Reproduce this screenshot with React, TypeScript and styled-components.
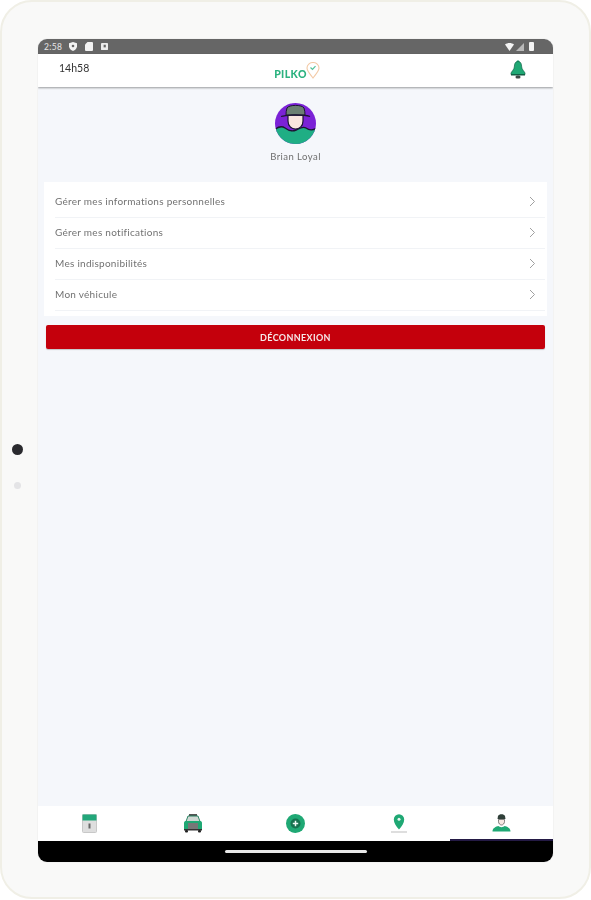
import React from "react";
import styled, { createGlobalStyle } from "styled-components";

const Global = createGlobalStyle`
  html, body { margin: 0; padding: 0; background: #ffffff; }
  body { font-family: "Lato", "Noto Sans", sans-serif; }
  * { box-sizing: border-box; }
`;

const Tablet = styled.div`
  position: relative;
  width: 591px;
  height: 899px;
  padding: 37px 36px;
  background: #f9f9f8;
  border: 2px solid #f0efe6;
  border-radius: 32px;
  display: flex;
  justify-content: center;
`;

const Sensor = styled.div<{ $top: number; $size: number; $color: string; $left: number }>`
  position: absolute;
  top: ${(p) => p.$top}px;
  left: ${(p) => p.$left}px;
  width: ${(p) => p.$size}px;
  height: ${(p) => p.$size}px;
  border-radius: 50%;
  background: ${(p) => p.$color};
`;

const Screen = styled.div`
  width: 515px;
  height: 823px;
  border-radius: 9px;
  overflow: hidden;
  display: flex;
  flex-direction: column;
  background: #f5f7fb;
  box-shadow: 0 0 1px rgba(0, 0, 0, 0.25);
  filter: blur(0.55px);
`;

const StatusBar = styled.div`
  height: 15px;
  flex: none;
  background: #666666;
  display: flex;
  align-items: center;
  justify-content: space-between;
  padding: 0 18px 0 6px;
`;

const StatusGroup = styled.div<{ $gap: number }>`
  display: flex;
  align-items: center;
  gap: ${(p) => p.$gap}px;
`;

const StatusTime = styled.span`
  font-size: 8.5px;
  color: #e6e6e6;
  letter-spacing: 0.3px;
  margin-right: 1px;
`;

const Header = styled.header`
  position: relative;
  height: 33px;
  flex: none;
  background: #ffffff;
  box-shadow: 0 1px 2px rgba(0, 0, 0, 0.38);
  display: grid;
  grid-template-columns: 1fr auto 1fr;
  padding: 0 27px 0 21px;
`;

const Clock = styled.span`
  font-size: 10.5px;
  color: #333333;
  margin-top: 8px;
`;

const Logo = styled.div`
  display: flex;
  align-items: flex-start;
  margin: 8px 0 0 9px;
`;

const LogoText = styled.span`
  font-size: 10.5px;
  font-weight: 900;
  color: #2bb27f;
  letter-spacing: 0.4px;
  line-height: 14px;
  margin-top: 5px;
`;

const BellSlot = styled.div`
  display: flex;
  justify-content: flex-end;
  align-items: flex-start;
  padding-top: 6px;
`;

const Content = styled.main`
  flex: 1;
  display: flex;
  flex-direction: column;
  align-items: center;
  padding-top: 16px;
`;

const Name = styled.div`
  font-size: 9.5px;
  color: #6e6e6e;
  letter-spacing: 0.45px;
  margin-top: 7px;
  line-height: 12px;
`;

const Menu = styled.ul`
  list-style: none;
  margin: 19px 0 0 6px;
  padding: 5px 2px 5px 11px;
  width: 503px;
  align-self: flex-start;
  background: #ffffff;
`;

const MenuRow = styled.li`
  height: 31px;
  display: flex;
  align-items: center;
  justify-content: space-between;
  padding: 0 9px 2px 0;
  border-bottom: 1px solid #f1f3f6;
  font-size: 10px;
  color: #727272;
  letter-spacing: 0.27px;
`;

const Logout = styled.button`
  width: 499px;
  height: 24px;
  margin: 9px 0 0 8px;
  align-self: flex-start;
  border: 0;
  border-radius: 2px;
  background: #c4000c;
  color: #f6e9e9;
  font: 700 9px "Lato", sans-serif;
  letter-spacing: 0.35px;
  box-shadow: 0 1px 1px rgba(0, 0, 0, 0.2);
`;

const Nav = styled.nav`
  height: 35px;
  flex: none;
  background: #ffffff;
  display: grid;
  grid-template-columns: repeat(5, 1fr);
`;

const NavItem = styled.div<{ $active?: boolean }>`
  display: flex;
  align-items: flex-start;
  justify-content: center;
  padding-top: 8px;
  border-bottom: 2px solid ${(p) => (p.$active ? "#241a45" : "transparent")};
`;

const GestureBar = styled.div`
  height: 21px;
  flex: none;
  background: #000000;
  display: flex;
  align-items: center;
  justify-content: center;
`;

const GesturePill = styled.div`
  width: 142px;
  height: 3px;
  border-radius: 2px;
  background: #e8e8e8;
`;

const Chevron = () => (
  <svg width="7" height="11" viewBox="0 0 7 11" fill="none">
    <path d="M1 1l4.500 4.500L1 10" stroke="#a0a0a0" strokeWidth="1" />
  </svg>
);

const green = "#1fa874";

const App = () => (
  <>
    <Global />
    <Tablet>
      <Sensor $top={442} $left={10} $size={11} $color="#2a2a2e" />
      <Sensor $top={480} $left={12} $size={7} $color="#e4e4e6" />
      <Screen>
        <StatusBar>
          <StatusGroup $gap={6}>
            <StatusTime>2:58</StatusTime>
            <svg width="8" height="9" viewBox="0 0 8 9"><path d="M4 0l4 1.300v3C8 6.600 6 8.300 4 9 2 8.300 0 6.600 0 4.300v-3z" fill="#f2f2f2" /><circle cx="4" cy="4" r="1.300" fill="#666" /></svg>
            <svg width="8" height="9" viewBox="0 0 8 9" style={{ marginLeft: 2 }}><path d="M2.500 0h4.500A1 1 0 0 1 8 1v7a1 1 0 0 1-1 1H1a1 1 0 0 1-1-1V2.500z" fill="#f2f2f2" /></svg>
            <svg width="7" height="7" viewBox="0 0 8 8" style={{ marginLeft: 2 }}><rect width="8" height="8" rx="1" fill="#ececec" /><rect x="3" y="2" width="2.500" height="3" fill="#666" /></svg>
          </StatusGroup>
          <StatusGroup $gap={2}>
            <svg width="9" height="8" viewBox="0 0 9 8"><path d="M0 1.500C2.600-.5 6.400-.5 9 1.500L4.500 8z" fill="#f4f4f4" /></svg>
            <svg width="8" height="8" viewBox="0 0 8 8"><path d="M8 0v8H0z" fill="#b9b9b9" /></svg>
            <svg width="6" height="9" viewBox="0 0 6 9" style={{ marginLeft: 3 }}><rect width="5" height="9" rx="1" fill="#f4f4f4" /></svg>
          </StatusGroup>
        </StatusBar>
        <Header>
          <Clock>14h58</Clock>
          <Logo>
            <LogoText>PILKO</LogoText>
            <svg width="14" height="17" viewBox="0 0 14 17" style={{ marginLeft: -1 }}>
              <path d="M7 16C4 12 1 9 1 6a6 5.500 0 0 1 12 0c0 3-3 6-6 10z" fill="none" stroke="#f3c9a5" strokeWidth="1.100" />
              <path d="M4.500 5.500l2 2 3-3.300" fill="none" stroke="#55c29a" strokeWidth="1.200" />
            </svg>
          </Logo>
          <BellSlot>
            <svg width="16" height="19" viewBox="0 0 16 19">
              <circle cx="8" cy="1.800" r="1.500" fill={green} />
              <path d="M8 1.500c3 0 3.500 2.500 3.700 5.500.2 2.500 2.300 4 3.300 6v1.500H1V13c1-2 3.100-3.500 3.300-6C4.500 4 5 1.500 8 1.500z" fill={green} stroke="#14664a" strokeWidth=".7" />
              <path d="M1 14.800h14" stroke="#0e5a40" strokeWidth="1.400" />
              <rect x="5.500" y="15.500" width="5" height="3" rx="1.500" fill="#3f4a46" />
            </svg>
          </BellSlot>
        </Header>
        <Content>
          <svg width="41" height="41" viewBox="0 0 41 41">
            <defs>
              <clipPath id="disc"><circle cx="20.500" cy="20.500" r="20.500" /></clipPath>
            </defs>
            <g clipPath="url(#disc)">
              <rect width="41" height="41" fill="#7b22d6" />
              <path d="M-1 27c5-4 8-4 11-2 4 3 7 4 11 2 4-2 7-4 10-2 4 3 7 2 11 0v18H-1z" fill="#1fae84" stroke="#1c1533" strokeWidth="1.400" />
              <path d="M13 12h15v6c0 5-3.500 8-7.500 8S13 23 13 18z" fill="#f9e5df" stroke="#1c1533" strokeWidth="1.200" />
              <path d="M12 5c2-3.500 15-3.500 17 0 .8 2.500 1 5 1 7H11c0-2 .2-4.500 1-7z" fill="#6b7f72" stroke="#1c1533" strokeWidth="1" />
              <path d="M6 13.500c6-2 23-2 29 0" fill="none" stroke="#1c1533" strokeWidth="1.300" />
            </g>
          </svg>
          <Name>Brian Loyal</Name>
          <Menu>
            {["Gérer mes informations personnelles", "Gérer mes notifications", "Mes indisponibilités", "Mon véhicule"].map((label) => (
              <MenuRow key={label}>
                {label}
                <Chevron />
              </MenuRow>
            ))}
          </Menu>
          <Logout>DÉCONNEXION</Logout>
        </Content>
        <Nav>
          <NavItem>
            <svg width="15" height="19" viewBox="0 0 15 19">
              <rect x=".5" y=".5" width="14" height="18" rx="1" fill="#dedede" stroke="#c8c8c8" />
              <rect x=".5" y=".5" width="14" height="6" fill="#22a77a" />
              <rect x="6.500" y="9.500" width="2" height="5" fill="#666" />
            </svg>
          </NavItem>
          <NavItem>
            <svg width="20" height="19" viewBox="0 0 20 19">
              <rect x="6" y="0" width="8" height="2" fill="#555" />
              <path d="M5 2h10l2 5.500H3z" fill="#cfd8d3" stroke="#1a7a58" strokeWidth=".9" />
              <path d="M1 9c0-1.500 1-2 2-2h14c1 0 2 .5 2 2v6H1z" fill="#1fa874" />
              <rect x="5" y="9" width="10" height="6" fill="#777" />
              <rect x="1" y="15" width="18" height="1.500" fill="#333" />
              <rect x="2" y="16" width="3" height="2.500" rx="1" fill="#222" />
              <rect x="15" y="16" width="3" height="2.500" rx="1" fill="#222" />
            </svg>
          </NavItem>
          <NavItem>
            <svg width="19" height="19" viewBox="0 0 19 19">
              <circle cx="9.500" cy="9.500" r="9.500" fill="#1fa874" />
              <circle cx="9.500" cy="9.500" r="5" fill="#15724f" />
              <path d="M9.500 6.800v5.400M6.800 9.500h5.400" stroke="#eef8f4" strokeWidth="1.500" />
            </svg>
          </NavItem>
          <NavItem>
            <svg width="18" height="19" viewBox="0 0 18 19">
              <path d="M9 15.500C6 12 3.800 9 3.800 5.500a5.200 5.200 0 0 1 10.400 0C14.200 9 12 12 9 15.500z" fill="#1fa874" />
              <circle cx="9" cy="5.300" r="1.500" fill="#e8f6f0" />
              <rect x="1" y="17.500" width="16" height="1" fill="#bdbdbd" />
            </svg>
          </NavItem>
          <NavItem $active>
            <svg width="19" height="19" viewBox="0 0 19 19" style={{ marginTop: -1 }}>
              <path d="M6 3c1-2.500 6-2.500 7 0l.5 3h-8z" fill="#2f3f38" />
              <path d="M6.500 6.500h6v2c0 2-1.500 3.500-3 3.500s-3-1.500-3-3.500z" fill="#f6e7e2" stroke="#333" strokeWidth=".6" />
              <path d="M.5 18.500c0-3.500 3.500-5 6-5.500 1 1.500 5 1.500 6 0 2.500.5 6 2 6 5.500z" fill="#1fa874" />
            </svg>
          </NavItem>
        </Nav>
        <GestureBar>
          <GesturePill />
        </GestureBar>
      </Screen>
    </Tablet>
  </>
);

export default App;
